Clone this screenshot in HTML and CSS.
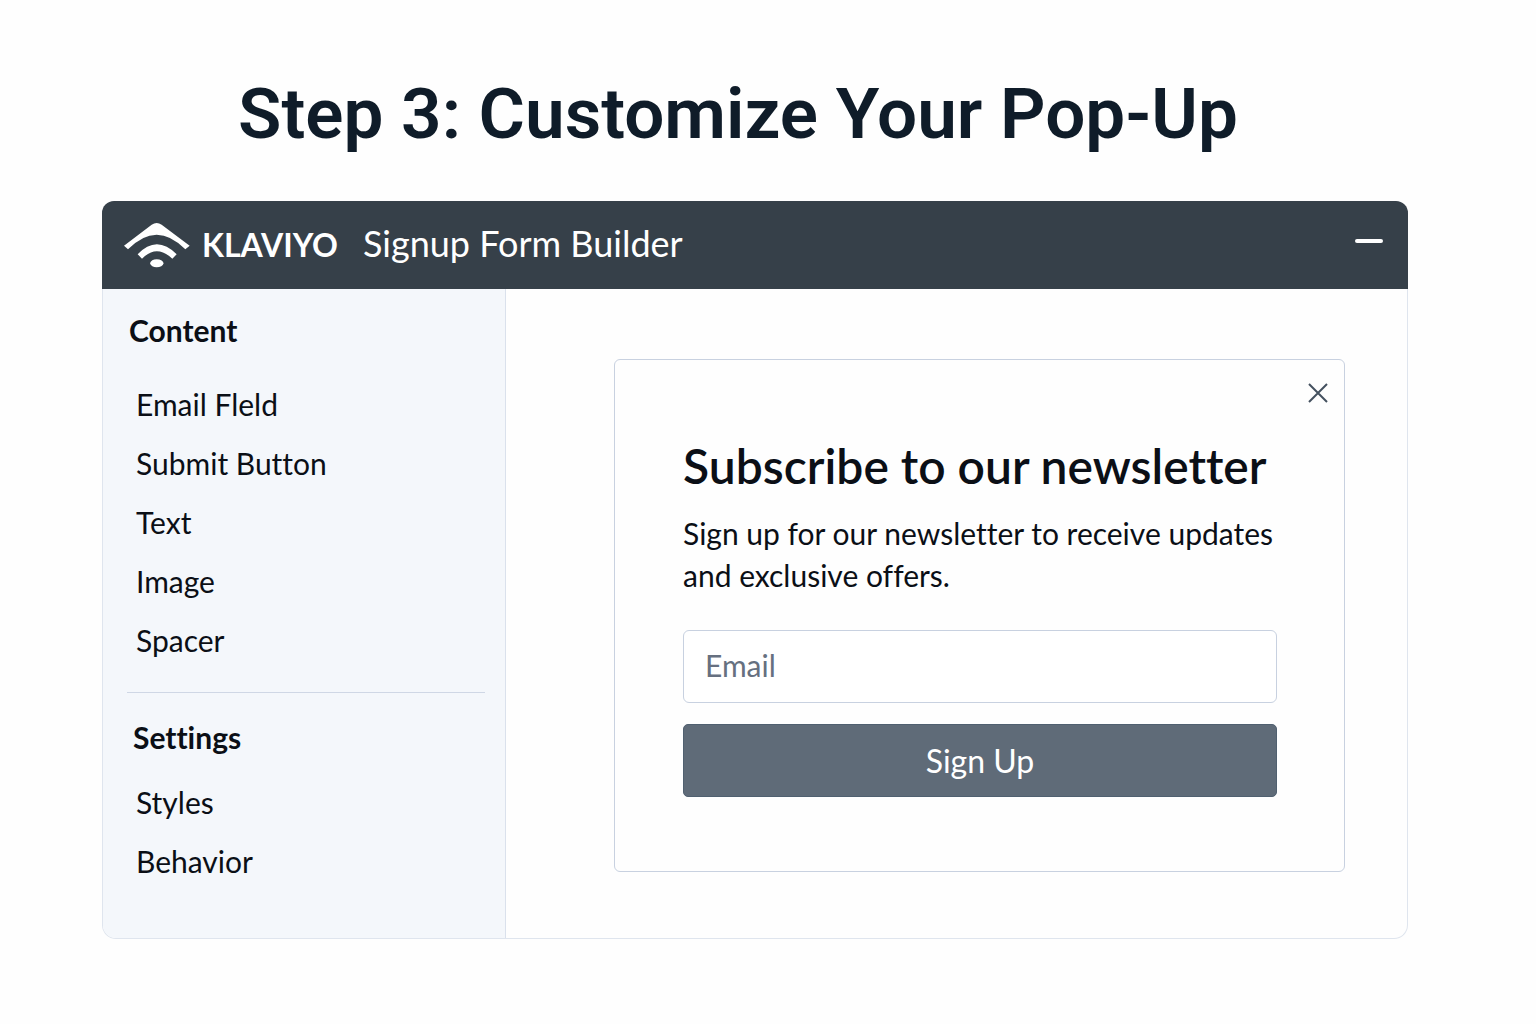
FILE: index.html
```html
<!DOCTYPE html>
<html lang="en">
	<head>
		<meta charset="UTF-8">
		<meta name="viewport" content="width=device-width, initial-scale=1">
		<title>Step 3: Customize Your Pop-Up</title>
		<link rel="stylesheet" href="styles.css">
	</head>
	<body>
		<h1 class="page-title">Step 3: Customize Your Pop-Up</h1>
		<div class="builder">
			<header class="topbar">
				<svg class="logo" viewBox="68 82 204 138" aria-hidden="true">
					<path d="M71 153 L154 90 Q169 80 184 90 L268 153 L255 164 Q169 76 83 164 Z"/>
					<path d="M112 179 Q169 119 229 179 L216 192 Q169 148 125 192 Z"/>
					<path d="M149 206 Q153 194 169 194 Q186 194 190 206 Q186 218 169 218 Q153 218 149 206 Z"/>
				</svg>
				<span class="brand">KLAVIYO</span>
				<span class="product">Signup Form Builder</span>
				<button class="minimize" type="button" aria-label="Minimize"></button>
			</header>
			<div class="workspace">
				<nav class="sidebar">
					<section class="group">
						<h2>Content</h2>
						<ul>
							<li><a href="#">Email Fleld</a></li>
							<li><a href="#">Submit Button</a></li>
							<li><a href="#">Text</a></li>
							<li><a href="#">Image</a></li>
							<li><a href="#">Spacer</a></li>
						</ul>
					</section>
					<section class="group settings">
						<h2>Settings</h2>
						<ul>
							<li><a href="#">Styles</a></li>
							<li><a href="#">Behavior</a></li>
						</ul>
					</section>
				</nav>
				<main class="canvas">
					<form class="popup">
						<button class="close" type="button" aria-label="Close">
							<svg viewBox="0 0 20 20" aria-hidden="true"><path d="M1 1 L19 19 M19 1 L1 19"/></svg>
						</button>
						<h2>Subscribe to our newsletter</h2>
						<p>Sign up for our newsletter to receive updates and exclusive offers.</p>
						<input type="email" placeholder="Email" aria-label="Email">
						<button class="submit" type="submit">Sign Up</button>
					</form>
				</main>
			</div>
		</div>
	</body>
</html>
```
FILE: styles.css
```css
* {
	box-sizing: border-box;
}

body {
	margin: 0;
	padding: 72px 128px 84px 102px;
	background: #fefefe;
	color: #0b0f16;
	font-family: Lato, "Open Sans", sans-serif;
	font-size: 30px;
	font-variant-ligatures: none;
	line-height: 36px;
}

h1, h2, p, ul {
	margin: 0;
	padding: 0;
}
ul {
	list-style: none;
}
a {
	color: inherit;
	text-decoration: none;
}
button, input {
	font: inherit;
}

.page-title {
	padding-right: 34px;
	color: #0f1c29;
	font-family: Roboto, Inter, sans-serif;
	font-size: 71px;
	font-weight: 600;
	line-height: 84px;
	text-align: center;
}

.builder {
	margin-top: 45px;
	border: 1px solid #dfe5ee;
	border-top: 0;
	border-radius: 14px;
}

.topbar {
	display: flex;
	align-items: center;
	height: 88px;
	margin: 0 -1px;
	padding: 0 25px 0 21px;
	border-radius: 12px 12px 0 0;
	background: #364049;
	color: #fff;
}
.logo {
	width: 68px;
	height: 46px;
	fill: #fff;
}
.brand {
	margin-left: 11px;
	font-size: 32px;
	font-weight: 700;
}
.product {
	margin-left: 25px;
	padding-bottom: 5px;
	font-size: 36px;
}
.minimize {
	width: 28px;
	height: 4px;
	margin: 0 0 8px auto;
	padding: 0;
	border: 0;
	border-radius: 2px;
	background: #fff;
}

.workspace {
	display: flex;
}

.sidebar {
	flex: 0 0 403px;
	padding: 23px 20px 56px 24px;
	border-right: 1px solid #dae1ec;
	border-radius: 0 0 0 13px;
	background: #f4f7fb;
}
.group h2 {
	padding-left: 2px;
	font-size: 30px;
	font-weight: 700;
}
.group ul {
	display: grid;
	gap: 23px;
	padding: 38px 0 34px 9px;
}
.settings {
	padding-top: 26px;
	border-top: 1px solid #cfd7e5;
}
.settings h2 {
	padding-left: 6px;
}
.settings ul {
	padding: 29px 0 0 9px;
}

.canvas {
	flex: 1;
	padding: 70px 62px 66px 108px;
}
.popup {
	position: relative;
	padding: 77px 67px 74px 68px;
	border: 1px solid #c8d1e0;
	border-radius: 6px;
}
.popup h2 {
	font-size: 48px;
	font-weight: 600;
	line-height: 58px;
}
.popup p {
	margin-top: 17px;
	line-height: 42px;
}
.popup input {
	display: block;
	width: 100%;
	height: 73px;
	margin-top: 34px;
	padding: 0 21px 3px;
	border: 1px solid #c8d1e0;
	border-radius: 6px;
	background: #fff;
	color: inherit;
}
.popup input::placeholder {
	color: #667080;
	opacity: 1;
}
.submit {
	display: block;
	width: 100%;
	height: 73px;
	margin-top: 21px;
	border: 1px solid #506070;
	border-radius: 5px;
	background: #5f6b78;
	color: #fff;
	font-size: 32px;
}
.close {
	position: absolute;
	top: 23px;
	right: 16px;
	width: 20px;
	height: 20px;
	padding: 0;
	border: 0;
	background: none;
}
.close svg {
	display: block;
	fill: none;
	stroke: #44515f;
	stroke-width: 2;
}
```
